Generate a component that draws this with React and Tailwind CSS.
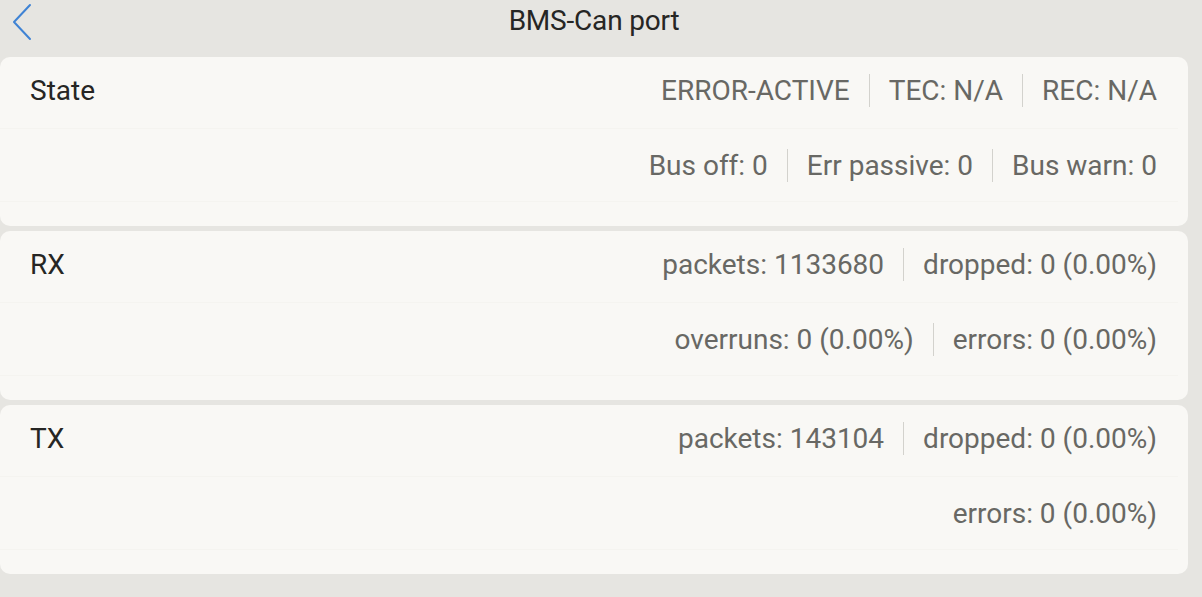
import React from "react";

const Sep = () => <div className="w-px h-[33px] bg-[#d3d2cd] mx-[19px]" />;

function Row({ items }) {
  return (
    <div className="flex items-center justify-end h-[33px]">
      {items.map((t, i) => (
        <React.Fragment key={i}>
          {i > 0 && <Sep />}
          <span className="text-[#686864] whitespace-nowrap">{t}</span>
        </React.Fragment>
      ))}
    </div>
  );
}

function Card({ label, row1, row2 }) {
  return (
    <div className="bg-[#f9f8f5] rounded-[10px] mr-[14px] h-[169px] flex flex-col">
      <div className="mt-[17px] pl-[30px] pr-[31px] flex items-center h-[33px]">
        <span className="text-[#262624] flex-1">{label}</span>
        <Row items={row1} />
      </div>
      <div className="h-[21px]" />
      <div className="mr-[10px] h-px bg-[#f5f4f0]" />
      <div className="h-[20px]" />
      <div className="pr-[31px]"><Row items={row2} /></div>
      <div className="h-[19px]" />
      <div className="mr-[10px] h-px bg-[#f5f4f0]" />
    </div>
  );
}

export default function App() {
  return (
    <div
      className="w-[1202px] h-[597px] bg-[#e6e5e1] text-[28px] leading-[33px] overflow-hidden"
      style={{ fontFamily: "Roboto, 'Noto Sans', sans-serif" }}
    >
      <div className="relative h-[57px] mr-[14px] flex justify-center">
        <svg className="absolute left-[11px] top-[3px]" width="22" height="38" viewBox="0 0 22 38">
          <path d="M19 2 L3 19 L19 36" fill="none" stroke="#3f83d4" strokeWidth="2" strokeLinecap="round" strokeLinejoin="round" />
        </svg>
        <span className="text-[#262624] mt-[4px] tracking-[-0.2px]">BMS-Can port</span>
      </div>
      <div className="flex flex-col gap-[5px]">
        <Card
          label="State"
          row1={["ERROR-ACTIVE", "TEC: N/A", "REC: N/A"]}
          row2={["Bus off: 0", "Err passive: 0", "Bus warn: 0"]}
        />
        <Card
          label="RX"
          row1={["packets: 1133680", "dropped: 0 (0.00%)"]}
          row2={["overruns: 0 (0.00%)", "errors: 0 (0.00%)"]}
        />
        <Card
          label="TX"
          row1={["packets: 143104", "dropped: 0 (0.00%)"]}
          row2={["errors: 0 (0.00%)"]}
        />
      </div>
    </div>
  );
}
